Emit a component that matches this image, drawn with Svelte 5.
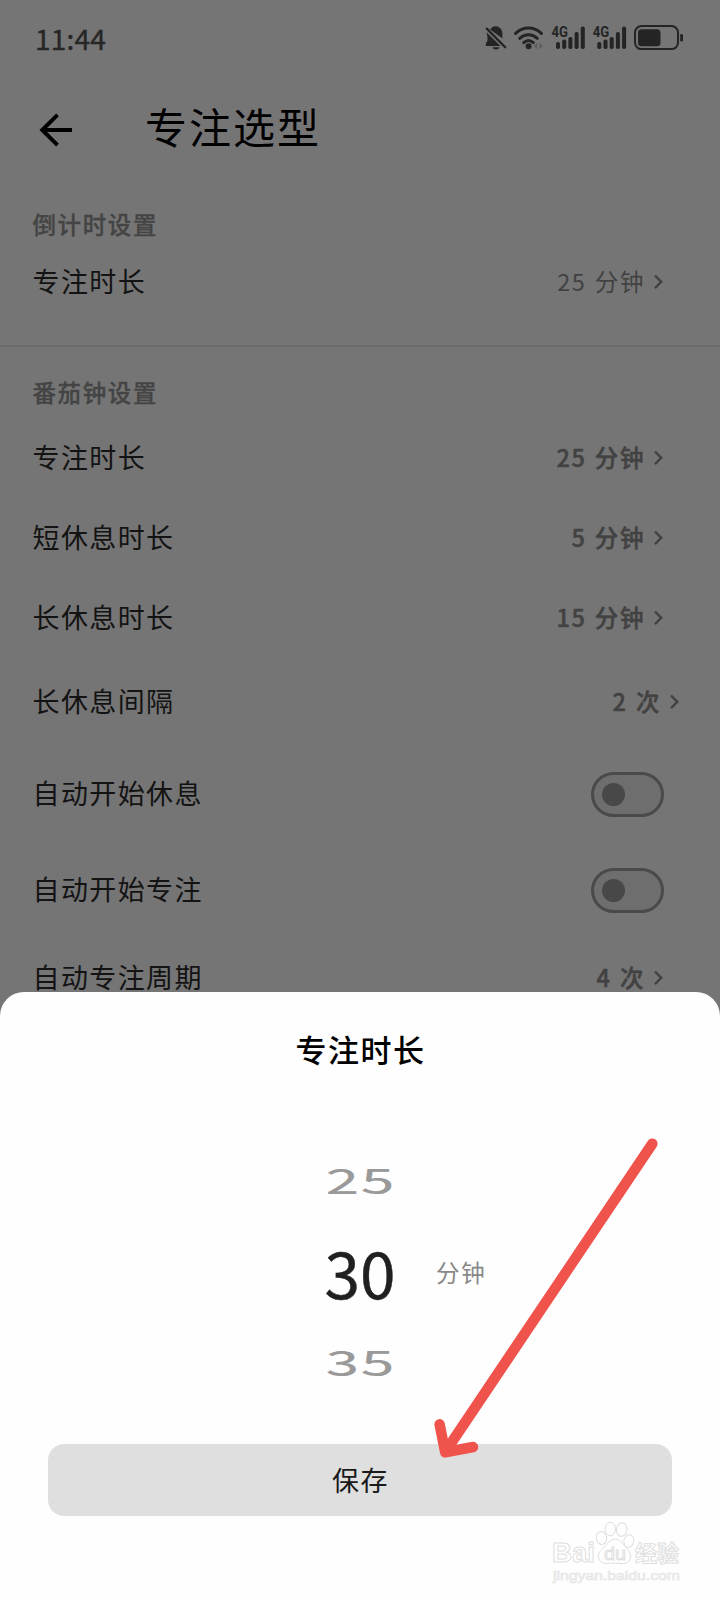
<script>
  const rows = [
    { label: '专注时长', value: '25 分钟', kind: 'h80' },
    { label: '短休息时长', value: '5 分钟', kind: 'h80' },
    { label: '长休息时长', value: '15 分钟', kind: 'h80' },
    { label: '长休息间隔', value: '2 次', kind: 'h88 wide' },
    { label: '自动开始休息', toggle: true, kind: 'h96' },
    { label: '自动开始专注', toggle: true, kind: 'h96' },
    { label: '自动专注周期', value: '4 次', kind: 'h80' }
  ];
  const bars = [
    { x: 0, h: 7 },
    { x: 6.2, h: 9.5 },
    { x: 12.4, h: 12 },
    { x: 18.6, h: 17 },
    { x: 24.8, h: 22.5 }
  ];
</script>

{#snippet chevron()}
  <svg class="chevron" width="10" height="16" viewBox="0 0 10 16"><path d="M1 1.500 7.300 7.800 1 14.100" /></svg>
{/snippet}

{#snippet signal(x)}
  <g transform="translate({x} 0)">
    <text class="net" x="-4.5" y="17.2" textLength="16.5" lengthAdjust="spacingAndGlyphs">4G</text>
    {#each bars as b}
      <rect x={b.x} y={29 - b.h} width="4" height={b.h} rx="1.8" />
    {/each}
  </g>
{/snippet}

<div class="screen">
  <div class="page">
    <div class="status">
      <span class="time">11:44</span>
      <svg class="icons" width="204" height="36" viewBox="0 0 204 36">
        <path d="M9.200 9.600C10.300 7.600 12 6.400 14.600 6.200c4.300 0.300 6.600 3.400 6.800 7.200v5.200zM5.500 12.300 19.500 26H4.800v-2.400l1.500-2.600c.5-2 .2-4.200-.8-8.700zM11.500 27.200h7c-.6 1.500-1.900 2.200-3.500 2.200s-2.900-.7-3.500-2.200z" />
        <path class="line" d="M5.800 8.600 24.200 27.200" stroke-width="2.300" />
        <path class="line" d="M34.600 13.400c7.500-7.200 18.300-7.200 25.800 0M38.700 18.300c5.200-4.800 12.400-4.800 17.600 0M42.700 22.600c3-2.600 6.600-2.600 9.600 0" stroke-width="3" />
        <circle cx="47.600" cy="26.200" r="3" />
        <path class="faint" d="M56.200 22.800v6.400l-3.400-3.200zM58.300 22.800v6.400l3.400-3.200z" />
        {@render signal(75)}
        {@render signal(116.300)}
        <rect class="line" x="154" y="6.100" width="43" height="23" rx="6.500" stroke-width="2" />
        <rect x="157" y="9.200" width="22.500" height="17" rx="3.500" />
        <rect x="199.200" y="14" width="2.800" height="7.500" rx="1.300" />
      </svg>
    </div>

    <header>
      <svg class="back" width="34" height="34" viewBox="0 0 34 34"><path d="M33 17H3M18.500 1.800 3.200 17l15.300 15.200" /></svg>
      <h1>专注选型</h1>
    </header>

    <section class="countdown">
      <h2>倒计时设置</h2>
      <div class="row h72">
        <span class="label">专注时长</span>
        <span class="value light">25 分钟</span>
        {@render chevron()}
      </div>
    </section>

    <section class="pomodoro">
      <h2>番茄钟设置</h2>
      {#each rows as r}
        <div class="row {r.kind}">
          <span class="label">{r.label}</span>
          {#if r.toggle}
            <span class="toggle"><i></i></span>
          {:else}
            <span class="value">{r.value}</span>
            {@render chevron()}
          {/if}
        </div>
      {/each}
    </section>
  </div>

  <div class="sheet">
    <h3>专注时长</h3>
    <div class="picker">
      <span class="num side">25</span>
      <span class="num current">30</span>
      <span class="unit">分钟</span>
      <span class="num side">35</span>
    </div>
    <button>保存</button>
  </div>

  <svg class="arrow" width="240" height="340" viewBox="430 1130 240 340">
    <path d="M652.300 1143.700 445.200 1452M439.600 1424.300 445.200 1452.300 473 1447" />
  </svg>

  <svg class="mark" width="140" height="70" viewBox="545 1520 140 70">
    <text class="brand" x="552" y="1562" font-size="28" textLength="43" lengthAdjust="spacingAndGlyphs">Bai</text>
    <ellipse cx="601.500" cy="1538" rx="5.200" ry="6.500" transform="rotate(-12 601.500 1538)" />
    <ellipse cx="610.300" cy="1529" rx="5.200" ry="6.800" />
    <ellipse cx="621.700" cy="1529.500" rx="5.200" ry="6.800" transform="rotate(8 621.700 1529.500)" />
    <ellipse cx="628.800" cy="1541" rx="5" ry="6.300" transform="rotate(12 628.800 1541)" />
    <path d="M615 1539c-5 0-7.500 5-11 8.500-3.500 2.800-6 5.500-5.600 9.500.5 4.800 4.600 6.800 8.600 6.500 4.500-.4 10.500-.4 15 0 4 .3 8.300-1.700 8.600-6.500.2-4-2-6.700-4.600-9.500-3.500-3.500-6-8.500-11-8.500z" />
    <text class="brand thin" x="604" y="1560" font-size="19" textLength="22" lengthAdjust="spacingAndGlyphs">du</text>
    <text class="brand" x="635" y="1560.500" font-size="22" textLength="44" lengthAdjust="spacingAndGlyphs">经验</text>
    <text class="url" x="553" y="1579.500" font-size="13" textLength="127" lengthAdjust="spacingAndGlyphs">jingyan.baidu.com</text>
  </svg>
</div>

<style>
  :global(body) {
    margin: 0;
    background: #757575;
  }
  .screen {
    position: relative;
    width: 720px;
    height: 1600px;
    overflow: hidden;
    background: #757575;
    font-family: 'Noto Sans CJK SC', sans-serif;
    color: #131313;
  }
  h1, h2, h3 {
    margin: 0;
    font-weight: 400;
  }
  .status {
    display: flex;
    justify-content: space-between;
    align-items: center;
    height: 76px;
    padding: 0 35px;
  }
  .time {
    padding-bottom: 1px;
    font-size: 28px;
    line-height: 40px;
    letter-spacing: 0.200px;
    color: #262626;
    -webkit-text-stroke: 0.400px #262626;
  }
  .icons {
    fill: #242424;
  }
  .icons .line {
    fill: none;
    stroke: #242424;
    stroke-linecap: round;
  }
  .icons .faint {
    fill: #5c5c5c;
  }
  .net {
    font: 700 14px Roboto, sans-serif;
  }
  header {
    display: flex;
    align-items: center;
    height: 106px;
    padding-left: 39px;
  }
  .back {
    margin-top: 2px;
  }
  .back path {
    fill: none;
    stroke: #000;
    stroke-width: 3.900;
  }
  h1 {
    margin: 0 0 7px 72px;
    font-size: 42px;
    letter-spacing: 2px;
    line-height: 60px;
    color: #000;
  }
  .countdown {
    height: 140px;
    padding-top: 23px;
    border-bottom: 2px solid #6b6b6b;
  }
  .pomodoro {
    padding-top: 26px;
  }
  h2 {
    height: 40px;
    padding-left: 32.500px;
    font-size: 23.500px;
    line-height: 39px;
    letter-spacing: 1.600px;
    font-weight: 500;
    color: #444;
    -webkit-text-stroke: 0.300px #444;
  }
  .pomodoro h2 {
    margin-bottom: 4px;
  }
  .row {
    display: flex;
    align-items: center;
    padding: 1px 56px 0 32.500px;
    box-sizing: border-box;
  }
  .row.wide { padding-right: 40px; }
  .h72 { height: 72px; }
  .h80 { height: 80px; }
  .h88 { height: 88px; }
  .h96 { height: 96px; }
  .label {
    flex: 1;
    padding-bottom: 2px;
    font-size: 27px;
    line-height: 40px;
    letter-spacing: 1.400px;
  }
  .value {
    font-size: 23.500px;
    line-height: 40px;
    padding-bottom: 2px;
    letter-spacing: 1.600px;
    word-spacing: 1.500px;
    font-weight: 500;
    color: #424242;
    -webkit-text-stroke: 0.500px #424242;
  }
  .value.light {
    font-weight: 400;
    -webkit-text-stroke: 0;
  }
  .chevron {
    margin-left: 9px;
    fill: none;
    stroke: #424242;
    stroke-width: 2.400;
  }
  .toggle {
    box-sizing: border-box;
    display: flex;
    align-items: center;
    width: 73px;
    height: 45px;
    margin-top: 1px;
    padding-left: 8px;
    border: 3px solid #4a4a4a;
    border-radius: 23px;
    background: #6e6e6e;
  }
  .toggle i {
    width: 23px;
    height: 23px;
    border-radius: 50%;
    background: #484848;
  }
  .sheet {
    position: absolute;
    left: 0;
    right: 0;
    bottom: 0;
    display: flex;
    flex-direction: column;
    height: 608px;
    border-radius: 24px 24px 0 0;
    background: #fefefe;
  }
  h3 {
    height: 116px;
    line-height: 114px;
    padding-left: 1px;
    text-align: center;
    font-size: 31px;
    letter-spacing: 1.500px;
    font-weight: 500;
    color: #000;
  }
  .picker {
    display: grid;
    grid-template-columns: 1fr 80px 1fr;
    grid-template-rows: 91px 91px 91px;
    align-items: center;
    height: 273px;
    margin-top: 25px;
  }
  .num {
    grid-column: 2;
    text-align: center;
    font-size: 64px;
    line-height: 90px;
  }
  .current {
    padding-top: 3px;
    color: #202020;
    -webkit-text-stroke: 0.400px #202020;
  }
  .side {
    padding-left: 2px;
    font-size: 61px;
    letter-spacing: 2px;
    color: #999;
    transform: scale(0.980, 0.580);
    -webkit-text-stroke: 0.400px #999;
  }
  .unit {
    padding: 4px 0 0 36px;
    font-size: 23.500px;
    letter-spacing: 1.700px;
    color: #888;
  }
  button {
    height: 72px;
    margin: 38px 48px 0;
    padding: 0 0 1px 1px;
    border: 0;
    border-radius: 16px;
    background: #dfdfdf;
    font: 400 27px/71px 'Noto Sans CJK SC', sans-serif;
    letter-spacing: 1.400px;
    color: #1a1a1a;
  }
  .arrow {
    position: absolute;
    left: 430px;
    top: 1130px;
    fill: none;
    stroke: #f0524c;
    stroke-width: 10.500;
    stroke-linecap: round;
    stroke-linejoin: round;
  }
  .mark {
    position: absolute;
    left: 545px;
    top: 1520px;
    fill: #fefefe;
    stroke: #dedede;
    stroke-width: 1;
  }
  .brand {
    font-family: 'Liberation Sans', 'Noto Sans CJK SC', sans-serif;
    font-weight: 700;
  }
  .thin {
    font-weight: 400;
  }
  .url {
    font-family: 'Liberation Sans', sans-serif;
    stroke: #e4e4e4;
    stroke-width: 0.700;
  }
</style>
